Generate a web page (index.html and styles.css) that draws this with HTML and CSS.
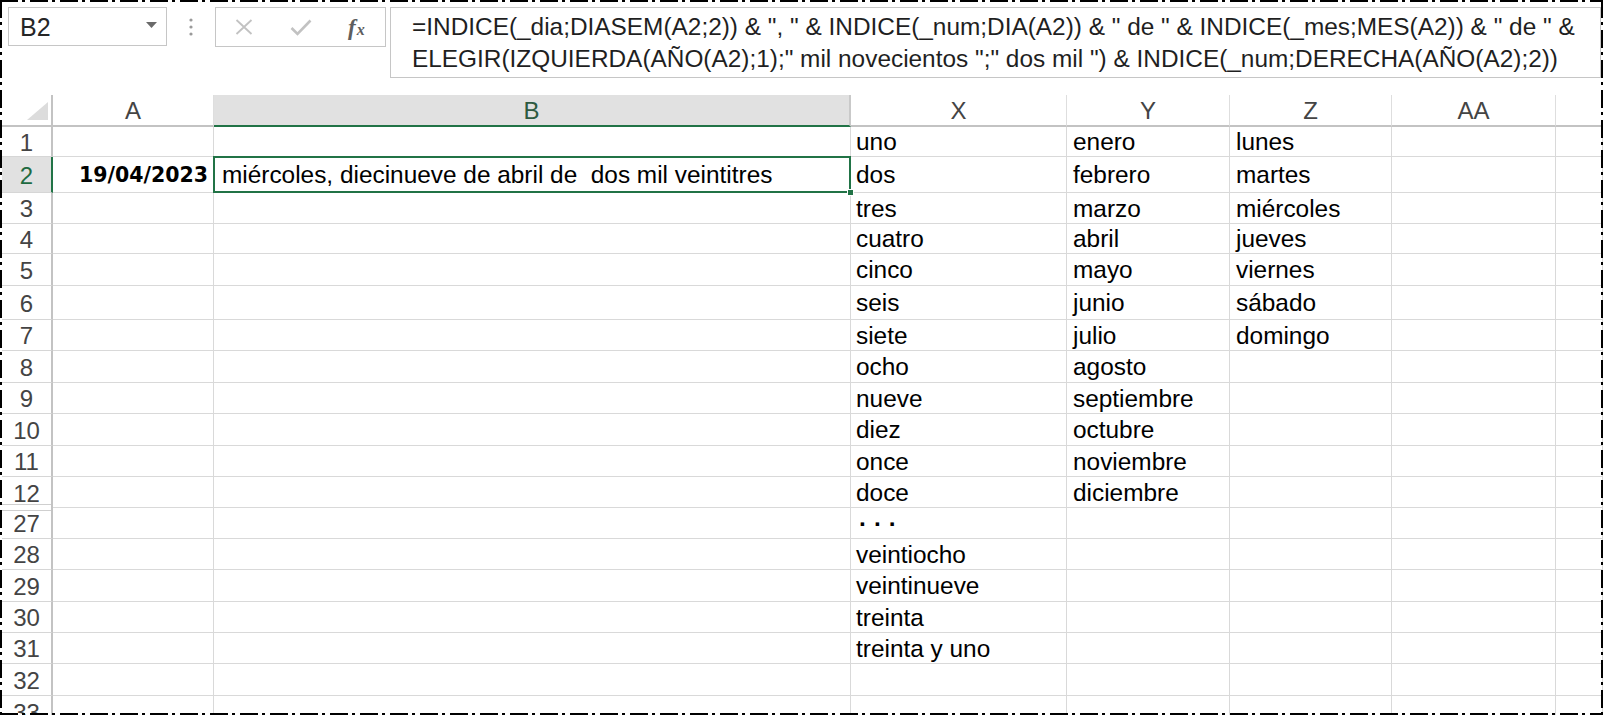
FILE: index.html
```html
<!DOCTYPE html>
<html lang="es">
<head>
<meta charset="utf-8">
<title>Fecha en letras</title>
<link rel="stylesheet" href="styles.css">
</head>
<body>
<div class="frame">
  <div class="toolbar">
    <div class="namebox">
      <span class="name">B2</span>
      <svg class="caret" width="11" height="6" viewBox="0 0 11 6"><path d="M0 0 H11 L5.5 6 Z" fill="#6a6a6a"/></svg>
    </div>
    <div class="sep">
      <svg width="4" height="18" viewBox="0 0 4 18"><circle cx="2" cy="2" r="1.6" fill="#9a9a9a"/><circle cx="2" cy="9" r="1.6" fill="#9a9a9a"/><circle cx="2" cy="16" r="1.6" fill="#9a9a9a"/></svg>
    </div>
    <div class="fxbox">
      <svg class="ico-x" width="18" height="16" viewBox="0 0 18 16"><path d="M1.5 1 L16.5 15 M16.5 1 L1.5 15" stroke="#c2c2c2" stroke-width="1.8" fill="none"/></svg>
      <svg class="ico-ok" width="22" height="17" viewBox="0 0 22 17"><path d="M1.5 9 L7.5 15 L20.5 1.5" stroke="#c2c2c2" stroke-width="2.6" fill="none"/></svg>
      <span class="fx"><span class="fx-f">f</span><span class="fx-x">x</span></span>
    </div>
    <div class="formula">=INDICE(_dia;DIASEM(A2;2)) &amp; ", " &amp; INDICE(_num;DIA(A2)) &amp; " de " &amp; INDICE(_mes;MES(A2)) &amp; " de " &amp;<br>ELEGIR(IZQUIERDA(AÑO(A2);1);" mil novecientos ";" dos mil ") &amp; INDICE(_num;DERECHA(AÑO(A2);2))</div>
  </div>

  <div class="sheet">
    <!-- header row -->
    <div class="corner"><svg width="21" height="18" viewBox="0 0 21 18"><path d="M21 0 V18 H0 Z" fill="#dcdcdc"/></svg></div>
    <div class="ch">A</div>
    <div class="ch ch-sel">B</div>
    <div class="ch">X</div>
    <div class="ch">Y</div>
    <div class="ch">Z</div>
    <div class="ch">AA</div>
    <div class="ch ch-last"></div>

    <!-- 1 -->
    <div class="rh">1</div><div class="c"></div><div class="c"></div><div class="c cx">uno</div><div class="c cy">enero</div><div class="c cz">lunes</div><div class="c"></div><div class="c"></div>
    <!-- 2 -->
    <div class="rh rh-sel">2</div><div class="c date">19/04/2023</div><div class="c active">miércoles, diecinueve de abril de &nbsp;dos mil veintitres</div><div class="c cx">dos</div><div class="c cy">febrero</div><div class="c cz">martes</div><div class="c"></div><div class="c"></div>
    <!-- 3 -->
    <div class="rh">3</div><div class="c"></div><div class="c"></div><div class="c cx">tres</div><div class="c cy">marzo</div><div class="c cz">miércoles</div><div class="c"></div><div class="c"></div>
    <!-- 4 -->
    <div class="rh">4</div><div class="c"></div><div class="c"></div><div class="c cx">cuatro</div><div class="c cy">abril</div><div class="c cz">jueves</div><div class="c"></div><div class="c"></div>
    <!-- 5 -->
    <div class="rh">5</div><div class="c"></div><div class="c"></div><div class="c cx">cinco</div><div class="c cy">mayo</div><div class="c cz">viernes</div><div class="c"></div><div class="c"></div>
    <!-- 6 -->
    <div class="rh">6</div><div class="c"></div><div class="c"></div><div class="c cx">seis</div><div class="c cy">junio</div><div class="c cz">sábado</div><div class="c"></div><div class="c"></div>
    <!-- 7 -->
    <div class="rh">7</div><div class="c"></div><div class="c"></div><div class="c cx">siete</div><div class="c cy">julio</div><div class="c cz">domingo</div><div class="c"></div><div class="c"></div>
    <!-- 8 -->
    <div class="rh">8</div><div class="c"></div><div class="c"></div><div class="c cx">ocho</div><div class="c cy">agosto</div><div class="c"></div><div class="c"></div><div class="c"></div>
    <!-- 9 -->
    <div class="rh">9</div><div class="c"></div><div class="c"></div><div class="c cx">nueve</div><div class="c cy">septiembre</div><div class="c"></div><div class="c"></div><div class="c"></div>
    <!-- 10 -->
    <div class="rh">10</div><div class="c"></div><div class="c"></div><div class="c cx">diez</div><div class="c cy">octubre</div><div class="c"></div><div class="c"></div><div class="c"></div>
    <!-- 11 -->
    <div class="rh">11</div><div class="c"></div><div class="c"></div><div class="c cx">once</div><div class="c cy">noviembre</div><div class="c"></div><div class="c"></div><div class="c"></div>
    <!-- 12 -->
    <div class="rh rh-hide-above">12</div><div class="c"></div><div class="c"></div><div class="c cx">doce</div><div class="c cy">diciembre</div><div class="c"></div><div class="c"></div><div class="c"></div>
    <!-- 27 -->
    <div class="rh rh-hide-below">27</div><div class="c"></div><div class="c"></div><div class="c cx dots">· · ·</div><div class="c"></div><div class="c"></div><div class="c"></div><div class="c"></div>
    <!-- 28 -->
    <div class="rh">28</div><div class="c"></div><div class="c"></div><div class="c cx">veintiocho</div><div class="c"></div><div class="c"></div><div class="c"></div><div class="c"></div>
    <!-- 29 -->
    <div class="rh">29</div><div class="c"></div><div class="c"></div><div class="c cx">veintinueve</div><div class="c"></div><div class="c"></div><div class="c"></div><div class="c"></div>
    <!-- 30 -->
    <div class="rh">30</div><div class="c"></div><div class="c"></div><div class="c cx">treinta</div><div class="c"></div><div class="c"></div><div class="c"></div><div class="c"></div>
    <!-- 31 -->
    <div class="rh">31</div><div class="c"></div><div class="c"></div><div class="c cx">treinta y uno</div><div class="c"></div><div class="c"></div><div class="c"></div><div class="c"></div>
    <!-- 32 -->
    <div class="rh">32</div><div class="c"></div><div class="c"></div><div class="c"></div><div class="c"></div><div class="c"></div><div class="c"></div><div class="c"></div>
    <!-- 33 -->
    <div class="rh">33</div><div class="c"></div><div class="c"></div><div class="c"></div><div class="c"></div><div class="c"></div><div class="c"></div><div class="c"></div>
  </div>
</div>
</body>
</html>
```

FILE: styles.css
```css
html, body {
  margin: 0;
  padding: 0;
  background: #ffffff;
}

.frame {
  position: relative;
  width: 1603px;
  height: 715px;
  box-sizing: border-box;
  padding-left: 2px;
  overflow: hidden;
  font-family: "Liberation Sans", Arial, sans-serif;
  color: #000;
  background: #fff;
}

/* dash-dot frame drawn over the content */
.frame::after {
  content: "";
  position: absolute;
  inset: 0;
  pointer-events: none;
  background:
    repeating-linear-gradient(90deg, #000 0 18px, transparent 18px 22px, #000 22px 25px, transparent 25px 30px) left top / 100% 2px no-repeat,
    repeating-linear-gradient(90deg, #000 0 18px, transparent 18px 22px, #000 22px 25px, transparent 25px 30px) left bottom / 100% 2px no-repeat,
    repeating-linear-gradient(180deg, #000 0 18px, transparent 18px 22px, #000 22px 25px, transparent 25px 30px) left top / 2px 100% no-repeat,
    repeating-linear-gradient(180deg, #000 0 18px, transparent 18px 22px, #000 22px 25px, transparent 25px 30px) right top / 2px 100% no-repeat;
}

/* ---------- formula bar ---------- */
.toolbar {
  display: flex;
  align-items: flex-start;
  height: 95px;
  box-sizing: border-box;
  padding: 7px 2px 0 6px;
}

.namebox {
  width: 159px;
  height: 39px;
  box-sizing: border-box;
  border: 1px solid #c6c6c6;
  display: flex;
  align-items: center;
  justify-content: space-between;
  padding: 0 9px 0 11px;
}

.name {
  font-size: 25px;
  color: #262626;
  line-height: 1;
  margin-top: 1px;
}

.caret {
  display: block;
  margin-top: -3px;
}

.sep {
  width: 48px;
  height: 39px;
  display: flex;
  align-items: center;
  justify-content: center;
}

.fxbox {
  width: 171px;
  height: 40px;
  box-sizing: border-box;
  border: 1px solid #c6c6c6;
  display: flex;
  align-items: center;
}

.ico-x {
  margin-left: 19px;
}

.ico-ok {
  margin-left: 37px;
}

.fx {
  margin-left: 36px;
  font-family: "Liberation Serif", "Times New Roman", serif;
  font-style: italic;
  font-weight: bold;
  color: #5e5e5e;
  line-height: 1;
  display: flex;
  align-items: baseline;
}

.fx-f {
  font-size: 23px;
}

.fx-x {
  font-size: 16px;
  margin-left: 1px;
}

.formula {
  flex: 1;
  height: 71px;
  margin-left: 4px;
  box-sizing: border-box;
  border: 1px solid #c6c6c6;
  padding: 3px 8px 0 21px;
  font-size: 24.4px;
  line-height: 31.5px;
  color: #1f1f1f;
  white-space: nowrap;
  overflow: hidden;
}

/* ---------- sheet ---------- */
.sheet {
  display: grid;
  grid-template-columns: 51px 161px 637px 216px 163px 162px 164px 1fr;
  grid-template-rows: 32px 30px 36px 31px 30px 32px 34px 31px 32px 31px 32px 31px 31px 31px 31px 32px 31px 31px 32px 32px;
  font-size: 24px;
}

.corner {
  box-sizing: border-box;
  border-right: 2px solid #c3c3c3;
  border-bottom: 2px solid #c3c3c3;
  display: flex;
  align-items: flex-end;
  justify-content: flex-end;
  padding: 0 3px 5px 0;
}

.corner svg {
  display: block;
}

.ch {
  box-sizing: border-box;
  border-right: 1px solid #dedede;
  border-bottom: 2px solid #c3c3c3;
  display: flex;
  align-items: center;
  justify-content: center;
  color: #444;
  line-height: 1;
  padding-top: 1px;
}

.ch-sel {
  background: #e1e1e1;
  border-right: 2px solid #c9c9c9;
  border-bottom: 2px solid #217346;
  color: #2d5a40;
}

.ch-last {
  border-right: none;
}

.rh {
  box-sizing: border-box;
  border-right: 2px solid #c3c3c3;
  border-bottom: 1px solid #d6d6d6;
  display: flex;
  align-items: center;
  justify-content: center;
  color: #444;
  line-height: 1;
  padding-top: 2px;
}

.rh-sel {
  background: #e1e1e1;
  border-right: 2px solid #217346;
  color: #1e6b41;
}

.rh-hide-above {
  border-bottom: none;
  background: linear-gradient(#cfcfcf, #cfcfcf) left bottom 3px / 100% 1px no-repeat;
}

.rh-hide-below {
  background: linear-gradient(#cfcfcf, #cfcfcf) left top 2px / 100% 1px no-repeat;
}

.c {
  box-sizing: border-box;
  border-right: 1px solid #d9d9d9;
  border-bottom: 1px solid #d9d9d9;
  display: flex;
  align-items: center;
  padding: 1px 5px 0 5px;
  white-space: nowrap;
  line-height: 26px;
  font-size: 24.4px;
  min-width: 0;
}

.cy,
.cz {
  padding-left: 6px;
}

.date {
  justify-content: flex-end;
  font-family: "DejaVu Sans", Verdana, sans-serif;
  font-weight: bold;
  font-size: 20.5px;
  padding-right: 5px;
}

.active {
  position: relative;
  padding-left: 8px;
  overflow: visible;
}

.active::before {
  content: "";
  position: absolute;
  left: -1px;
  top: -1px;
  right: -1px;
  bottom: -1px;
  border: 2px solid #217346;
  pointer-events: none;
}

.active::after {
  content: "";
  position: absolute;
  right: -4px;
  bottom: -4px;
  width: 7px;
  height: 7px;
  background: #217346;
  border: 1px solid #fff;
  box-sizing: border-box;
}

.dots {
  padding-left: 8px;
  font-weight: bold;
}
```
